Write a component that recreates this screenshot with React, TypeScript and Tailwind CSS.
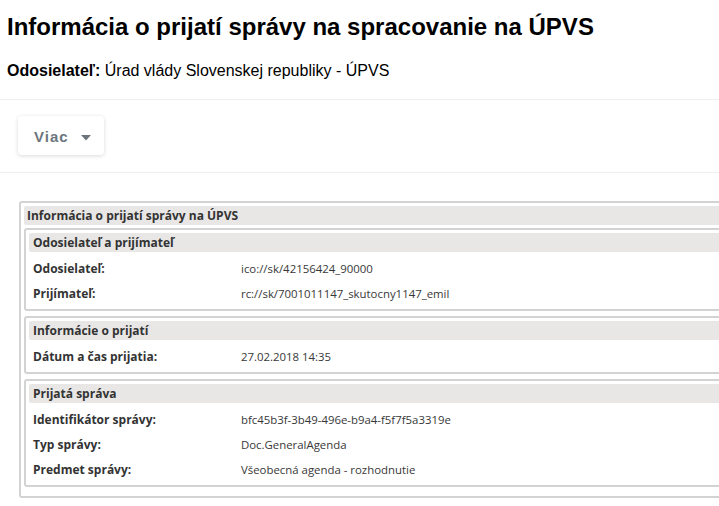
import React from "react";

const Row = ({ label, value }: { label: string; value: string }) => (
  <div className="flex h-[25px] items-center">
    <div className="w-[212px] pl-[4px] text-[12px] font-bold text-[#333]">{label}</div>
    <div className="text-[11.4px] text-[#383838]">{value}</div>
  </div>
);

const Section = ({ title, children }: { title: string; children: React.ReactNode }) => (
  <div className="rounded-[3px] border-2 border-[#d3d3d3] p-[3px]">
    <div className="h-[19px] rounded-[2px] bg-[#e8e7e5] pl-[4px] font-bold leading-[19px] text-[#333]">{title}</div>
    <div className="pt-[4px]">{children}</div>
  </div>
);

export default function App() {
  return (
    <div className="w-[719px] h-[506px] overflow-hidden bg-white" style={{ fontFamily: "Arial, 'Liberation Sans', sans-serif" }}>
      <div className="px-[7px] pt-[10px]">
        <h1 className="text-[24px] font-bold leading-[34px] text-black" style={{ fontFamily: "'Liberation Sans', Arial, sans-serif" }}>
          Informácia o prijatí správy na spracovanie na ÚPVS
        </h1>
        <div className="mt-[17px] text-[16px] leading-[20px] text-black">
          <span className="font-bold">Odosielateľ:</span> Úrad vlády Slovenskej republiky - ÚPVS
        </div>
      </div>
      <div className="mt-[18px] border-t border-[#efefef]" />
      <div className="h-[72px] pl-[18px] pt-[16px]">
        <button className="flex h-[39px] w-[86px] items-center rounded-[4px] bg-white pl-[16px] pt-[4px] text-[15px] font-bold tracking-[1px] text-[#6c757d] shadow-[0_1px_4px_rgba(0,0,0,0.15)]">
          Viac
          <svg className="ml-[12px]" width="10" height="6" viewBox="0 0 10 6">
            <path d="M0 0 L10 0 L5 5.5 Z" fill="#6c757d" />
          </svg>
        </button>
      </div>
      <div className="border-t border-[#efefef]" />
      <div
        className="ml-[19px] mt-[28px] w-[740px] rounded-[3px] border-2 border-[#d3d3d3] p-[3px] pb-[9px] text-[12px]"
        style={{ fontFamily: "'Open Sans', 'DejaVu Sans', sans-serif" }}
      >
        <div className="h-[19px] rounded-[2px] bg-[#e8e7e5] pl-[3px] font-bold leading-[19px] text-[#333]">
          Informácia o prijatí správy na ÚPVS
        </div>
        <div className="mt-[3px] flex flex-col gap-[5px]">
          <Section title="Odosielateľ a prijímateľ">
            <Row label="Odosielateľ:" value="ico://sk/42156424_90000" />
            <Row label="Prijímateľ:" value="rc://sk/7001011147_skutocny1147_emil" />
          </Section>
          <Section title="Informácie o prijatí">
            <Row label="Dátum a čas prijatia:" value="27.02.2018 14:35" />
          </Section>
          <Section title="Prijatá správa">
            <Row label="Identifikátor správy:" value="bfc45b3f-3b49-496e-b9a4-f5f7f5a3319e" />
            <Row label="Typ správy:" value="Doc.GeneralAgenda" />
            <Row label="Predmet správy:" value="Všeobecná agenda - rozhodnutie" />
          </Section>
        </div>
      </div>
    </div>
  );
}
